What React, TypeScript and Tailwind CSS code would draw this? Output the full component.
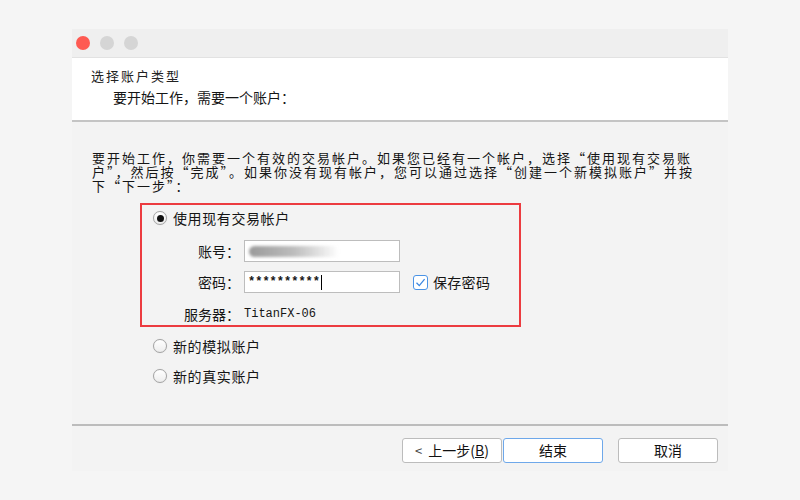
import React from 'react'

const cjk = { fontFamily: '"Noto Sans CJK SC", "Noto Sans", sans-serif' }
const mono = { fontFamily: '"Liberation Mono", "DejaVu Sans Mono", monospace' }

const Radio = ({ checked }: { checked?: boolean }) => (
	<span className="flex h-[14px] w-[14px] shrink-0 items-center justify-center rounded-full border border-[#a3a3a3] bg-gradient-to-b from-white to-[#ededed] shadow-[0_0_1px_rgba(0,0,0,0.15)]">
		{checked && <span className="h-[7px] w-[7px] rounded-full bg-[#111]" />}
	</span>
)

const Button = ({ children, primary }: { children: React.ReactNode; primary?: boolean }) => (
	<button
		className={
			primary
				? 'flex h-[25px] w-[100px] items-center justify-center rounded-[3px] border border-[#6ea8ea] bg-white text-[14px] text-[#111]'
				: 'flex h-[25px] w-[100px] items-center justify-center rounded-[3px] border border-[#bcbcbc] bg-white text-[14px] text-[#111]'
		}
		style={cjk}
	>
		{children}
	</button>
)

export default function App() {
	return (
		<div lang="zh-CN" className="h-[500px] w-[800px] bg-[#f5f5f5] pl-[72px] pt-[29px]" style={cjk}>
			<div className="flex h-[442px] w-[656px] flex-col bg-[#f3f3f3] text-[#151515]">
				{/* title bar */}
				<div className="flex h-[29px] items-center gap-[10px] border-b border-[#e2e2e2] bg-[#efefef] pl-[4px]">
					<span className="h-[14px] w-[14px] rounded-full bg-[#fe5a52]" />
					<span className="h-[14px] w-[14px] rounded-full bg-[#d5d5d5]" />
					<span className="h-[14px] w-[14px] rounded-full bg-[#d5d5d5]" />
				</div>

				{/* header */}
				<div className="h-[64px] border-b-2 border-[#c4c4c4] bg-white pl-[19px] pt-[8px]">
					<div className="text-[13px] leading-[20px] tracking-[2px] text-[#222]">选择账户类型</div>
					<div className="pl-[22px] text-[14px] leading-[22px]">要开始工作，需要一个账户：</div>
				</div>

				{/* body */}
				<div className="flex flex-1 flex-col">
					<div className="pl-[20px] pt-[29px] text-[13px] leading-[14px] tracking-[2px]">
						<div>要开始工作，你需要一个有效的交易帐户。如果您已经有一个帐户，选择“使用现有交易账</div>
						<div>户”，然后按“完成”。如果你没有现有帐户，您可以通过选择“创建一个新模拟账户”并按</div>
						<div>下“下一步”：</div>
					</div>

					<div className="ml-[68px] mt-[10px] h-[124px] w-[381px] border-2 border-[#ec3b40] pl-[11px] pt-[3px]">
						<div className="flex h-[20px] items-center gap-[6px] text-[14px] tracking-[0.6px]">
							<Radio checked />
							<span>使用现有交易帐户</span>
						</div>

						<div className="mt-[12px] flex items-center">
							<span className="w-[91px] pr-[4px] text-right text-[14px]">账号：</span>
							<div className="relative h-[22px] w-[156px] border border-[#bdbdbd] bg-white">
								<div className="absolute left-[4px] top-[5px] h-[11px] w-[90px] rounded-full bg-gradient-to-r from-[#9a9a9a] via-[#bdbdbd] to-transparent blur-[1.5px]" />
							</div>
						</div>

						<div className="mt-[9px] flex items-center">
							<span className="w-[91px] pr-[4px] text-right text-[14px]">密码：</span>
							<div className="flex h-[22px] w-[156px] items-center border border-[#bdbdbd] bg-white pl-[3px]">
								<span className="text-[12px] font-bold leading-[12px]" style={mono}>**********</span>
								<span className="ml-[1px] h-[15px] w-[1px] bg-black" />
							</div>
							<span className="ml-[13px] flex h-[15px] w-[15px] items-center justify-center rounded-[3px] border border-[#4a93e6] bg-white">
								<svg width="11" height="11" viewBox="0 0 11 11" fill="none">
									<path d="M1.5 5.8 L4.3 8.6 L9.6 2.2" stroke="#3c87e0" strokeWidth="1.3" />
								</svg>
							</span>
							<span className="ml-[5px] text-[14px] tracking-[0.3px]">保存密码</span>
						</div>

						<div className="mt-[10px] flex h-[22px] items-center">
							<span className="w-[91px] pr-[4px] text-right text-[14px]">服务器：</span>
							<span className="text-[12px]" style={mono}>TitanFX-06</span>
						</div>
					</div>

					<div className="ml-[81px] mt-[9px] flex h-[20px] items-center gap-[6px] text-[14px] tracking-[0.6px]">
						<Radio />
						<span>新的模拟账户</span>
					</div>
					<div className="ml-[81px] mt-[10px] flex h-[20px] items-center gap-[6px] text-[14px] tracking-[0.6px]">
						<Radio />
						<span>新的真实账户</span>
					</div>

					{/* footer */}
					<div className="mt-[38px] border-t-2 border-[#bcbcbc]" />
					<div className="flex justify-end pr-[10px] pt-[12px]">
						<div className="flex gap-[1px]">
							<Button>
								<span className="mr-[6px] text-[13px] text-[#444]">&lt;</span>上一步(<span className="underline">B</span>)
							</Button>
							<Button primary>结束</Button>
						</div>
						<div className="ml-[15px]">
							<Button>取消</Button>
						</div>
					</div>
				</div>
			</div>
		</div>
	)
}
